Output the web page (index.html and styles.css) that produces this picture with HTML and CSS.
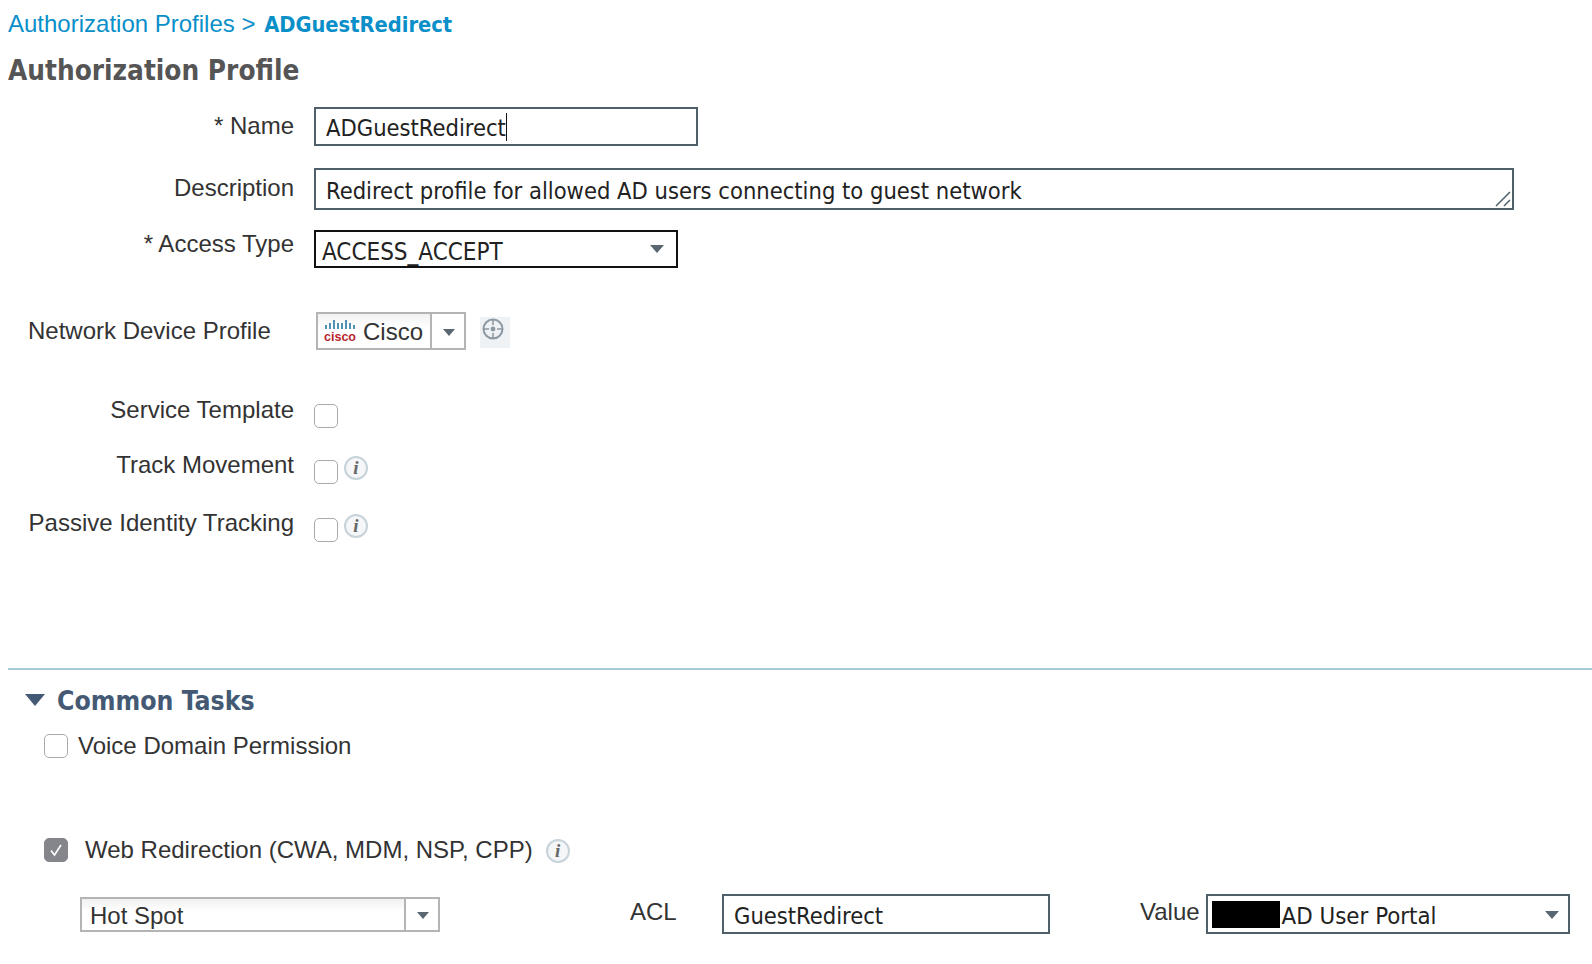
FILE: index.html
```html
<!DOCTYPE html>
<html lang="en">
<head>
    <meta charset="UTF-8">
    <meta name="viewport" content="width=device-width, initial-scale=1.0">
    <title>Authorization Profile</title>
    <link rel="stylesheet" href="styles.css">
</head>
<body>
    <div class="breadcrumb">Authorization Profiles &gt; <b>ADGuestRedirect</b></div>
    <h2 class="page-title">Authorization Profile</h2>

    <div class="form-row row-name">
        <label class="form-label">* Name</label>
        <div class="text-box name-box">ADGuestRedirect<span class="caret"></span></div>
    </div>
    <div class="form-row row-desc">
        <label class="form-label">Description</label>
        <div class="text-box desc-box">Redirect profile for allowed AD users connecting to guest network
            <svg class="resize-grip" width="16" height="16" viewBox="0 0 16 16"><path d="M1 15L15 1M9 15L15 9" stroke="#50606a" stroke-width="1.5" fill="none"/></svg>
        </div>
    </div>
    <div class="form-row row-access">
        <label class="form-label">* Access Type</label>
        <div class="text-box access-box">ACCESS_ACCEPT<span class="arrow"></span></div>
    </div>

    <div class="form-row row-device">
        <label class="device-label">Network Device Profile</label>
        <div class="combo device-combo">
            <div class="combo-value">
                <span class="cisco-logo">
                    <svg width="30" height="13" viewBox="0 0 30 13"><path d="M1 6v4M5 4v6M9 1v9M13 4v6M17 4v6M21 1v9M25 4v6M29 6v4" stroke="#3f86ac" stroke-width="1.8"/></svg>
                    <span class="cisco-word">cisco</span>
                </span>
                Cisco
            </div>
            <div class="combo-btn"><span class="arrow"></span></div>
        </div>
        <span class="target-btn">
            <svg width="24" height="24" viewBox="0 0 24 24"><circle cx="12" cy="12" r="9.5" fill="none" stroke="#8d99a2" stroke-width="2"/><circle cx="12" cy="12" r="2.4" fill="#8d99a2"/><path d="M12 2v6M12 16v6M2 12h6M16 12h6" stroke="#8d99a2" stroke-width="1.6"/></svg>
        </span>
    </div>

    <div class="form-row row-service">
        <label class="form-label">Service Template</label>
        <span class="check"></span>
    </div>
    <div class="form-row row-track">
        <label class="form-label">Track Movement</label>
        <span class="check"></span>
        <span class="info">i</span>
    </div>
    <div class="form-row row-passive">
        <label class="form-label">Passive Identity Tracking</label>
        <span class="check"></span>
        <span class="info">i</span>
    </div>

    <hr class="divider">

    <div class="tasks-head"><span class="tasks-arrow"></span>Common Tasks</div>
    <div class="task-row row-voice">
        <span class="check"></span>
        <span class="task-label">Voice Domain Permission</span>
    </div>
    <div class="task-row row-web">
        <span class="check checked">
            <svg width="16" height="16" viewBox="0 0 16 16"><path d="M3 8.5L6.5 13L13 3" stroke="#fff" stroke-width="1.6" fill="none"/></svg>
        </span>
        <span class="task-label web-label">Web Redirection (CWA, MDM, NSP, CPP)</span>
        <span class="info">i</span>
    </div>
    <div class="redirect-row">
        <div class="combo hotspot-combo">
            <div class="combo-value">Hot Spot</div>
            <div class="combo-btn"><span class="arrow"></span></div>
        </div>
        <span class="acl-label">ACL</span>
        <div class="text-box acl-box">GuestRedirect</div>
        <span class="value-label">Value</span>
        <div class="text-box value-box"><span class="redacted"></span><span class="value-text">AD User Portal</span><span class="arrow"></span></div>
    </div>
</body>
</html>
```

FILE: styles.css
```css
html, body { margin: 0; padding: 0; background: #fff; }
body { width: 1592px; height: 964px; overflow: hidden; font-family: "Liberation Sans", Arial, sans-serif; font-size: 24px; color: #333; }

.breadcrumb { margin: 9px 0 0 8px; height: 29px; line-height: 29px; color: #0a8fc9; font-size: 24px; white-space: nowrap; }
.breadcrumb b { font-family: "DejaVu Sans", sans-serif; font-stretch: condensed; font-size: 21.7px; margin-left: 2px; }
.page-title { margin: 15px 0 0 8px; height: 36px; line-height: 36px; font-family: "DejaVu Sans", sans-serif; font-stretch: condensed; font-weight: bold; font-size: 27.7px; color: #555; }

.form-row { display: flex; align-items: flex-start; }
.form-label { width: 294px; margin-right: 20px; text-align: right; flex: none; white-space: nowrap; line-height: 28px; }

.text-box { box-sizing: border-box; border: 2px solid #50606a; display: flex; align-items: center; position: relative; font-family: "DejaVu Sans", sans-serif; font-stretch: condensed; font-size: 23.5px; color: #222; white-space: nowrap; padding: 3px 0 0 10px; }
.caret { display: inline-block; width: 1px; height: 28px; background: #111; margin-bottom: 3px; }
.arrow { display: inline-block; width: 0; height: 0; border-left: 7px solid transparent; border-right: 7px solid transparent; border-top: 8px solid #5a6770; }

.row-name { margin-top: 18px; }
.row-name .form-label { margin-top: 5px; }
.name-box { width: 384px; height: 39px; }
.row-desc { margin-top: 22px; }
.row-desc .form-label { margin-top: 6px; }
.desc-box { width: 1200px; height: 42px; }
.resize-grip { position: absolute; right: 1px; bottom: 1px; }
.row-access { margin-top: 20px; }
.row-access .form-label { margin-top: 0; }
.access-box { width: 364px; height: 38px; border-color: #111; padding: 6px 12px 0 6px; justify-content: space-between; font-size: 24px; }
.access-box .arrow { margin-bottom: 6px; }

.row-device { margin-top: 44px; align-items: center; }
.device-label { width: 288px; margin-left: 28px; flex: none; }
.combo { box-sizing: border-box; display: flex; border: 2px solid #b4b4b4; font-size: 24px; color: #333; background: #fff; }
.combo-value { flex: 1; display: flex; align-items: center; padding-top: 2px; background: linear-gradient(#f1f1f1, #fff 40%); white-space: nowrap; }
.combo-btn { width: 34px; flex: none; border-left: 2px solid #b4b4b4; display: flex; align-items: center; justify-content: center; padding-top: 2px; padding-left: 1px; box-sizing: border-box; }
.combo-btn .arrow { border-left-width: 6px; border-right-width: 6px; border-top-width: 7px; }
.device-combo { width: 150px; height: 38px; }
.device-combo .combo-value { padding-left: 7px; gap: 8px; }
.cisco-logo { display: inline-flex; flex-direction: column; align-items: center; width: 30px; margin-bottom: 2px; }
.cisco-word { font-family: "Liberation Sans", sans-serif; font-weight: bold; font-size: 12.5px; line-height: 11px; color: #b8252f; }
.target-btn { margin: 2px 0 0 14px; width: 30px; height: 31px; background: #eef2f5; display: flex; justify-content: flex-start; padding-left: 1px; box-sizing: border-box; }

.check { display: block; flex: none; box-sizing: border-box; width: 24px; height: 24px; border: 1.5px solid #aaa; border-radius: 5px; background: #fff; }
.check.checked { background: #85868c; border-color: #85868c; display: flex; align-items: center; justify-content: center; }
.info { display: block; flex: none; box-sizing: border-box; width: 24px; height: 24px; margin-left: 6px; border: 2px solid #c6d3da; border-radius: 50%; background: #f4f6f7; color: #666; font-family: "Liberation Serif", serif; font-style: italic; font-weight: bold; font-size: 19px; line-height: 20px; text-align: center; }

.row-service { margin-top: 46px; }
.row-service .check { margin-top: 8px; }
.row-track { margin-top: 25px; }
.row-track .form-label, .row-passive .form-label { margin-top: -2px; }
.row-track .check { margin-top: 7px; }
.row-track .info, .row-passive .info { margin-top: 3px; }
.row-passive { margin-top: 27px; }
.row-passive .check { margin-top: 7px; }

.divider { margin: 126px 0 0 8px; border: 0; height: 2px; background: #a4cbd7; }

.tasks-head { display: flex; align-items: center; height: 34px; margin: 13px 0 0 25px; font-family: "DejaVu Sans", sans-serif; font-stretch: condensed; font-weight: bold; font-size: 26.4px; color: #445a74; }
.tasks-arrow { width: 0; height: 0; margin-right: 12px; border-left: 10px solid transparent; border-right: 10px solid transparent; border-top: 12px solid #445a74; }

.task-row { display: flex; align-items: center; margin-left: 44px; height: 28px; }
.task-label { margin-left: 10px; white-space: nowrap; }
.row-voice { margin-top: 15px; }
.row-web { margin-top: 76px; }
.web-label { margin-left: 17px; margin-right: 8px; }
.row-web .info { margin-left: 5px; margin-top: 2px; }

.redirect-row { display: flex; align-items: flex-start; margin: 30px 0 0 80px; }
.hotspot-combo { width: 360px; height: 35px; margin-top: 3px; }
.hotspot-combo .combo-value { padding: 3px 0 0 8px; }
.acl-label { margin: 4px 46px 0 190px; width: 46px; }
.acl-box { width: 328px; height: 40px; padding-top: 4px; }
.value-label { margin: 4px 6px 0 90px; }
.value-box { width: 364px; height: 40px; padding: 4px 9px 0 4px; }
.value-box .arrow { margin-left: auto; margin-bottom: 2px; }
.value-text { font-size: 23.8px; margin-left: 2px; }
.redacted { width: 68px; height: 27px; background: #000; flex: none; margin-bottom: 4px; }
```
